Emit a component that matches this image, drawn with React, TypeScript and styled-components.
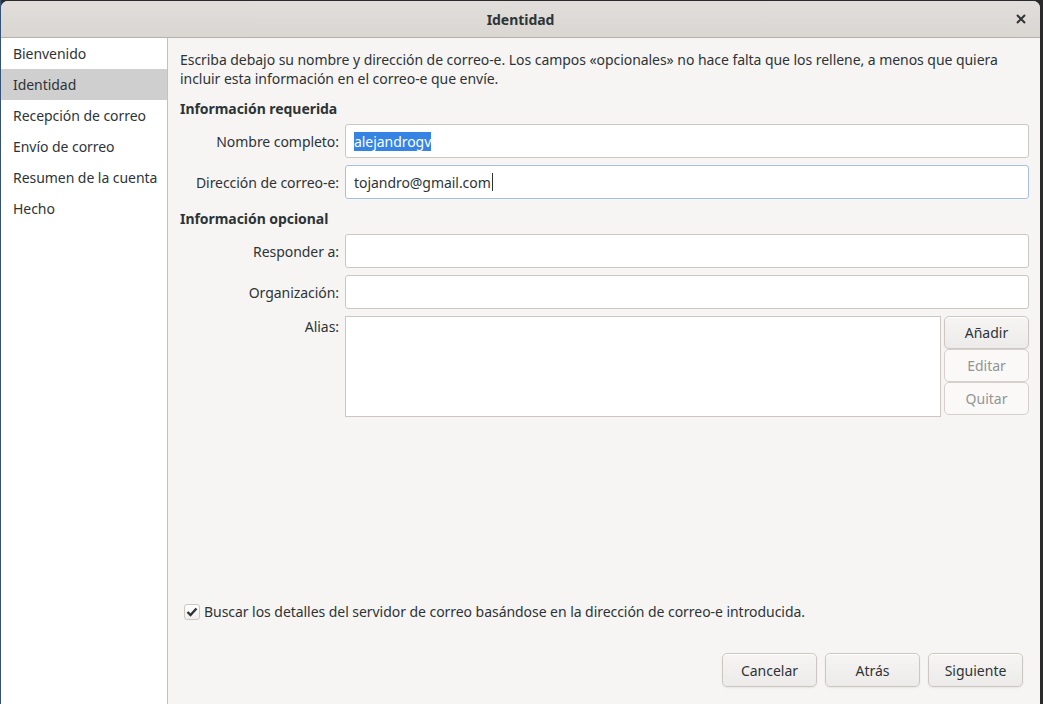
import React, {useState} from 'react';
import styled, {createGlobalStyle} from 'styled-components';

const GlobalStyle = createGlobalStyle`
  html, body {
    margin: 0;
    padding: 0;
    height: 100%;
    background: #2e3436;
  }
  body {
    font-family: "Noto Sans", "DejaVu Sans", sans-serif;
    font-size: 14px;
    letter-spacing: -0.05px;
    color: #2e3436;
  }
  #root {
    height: 100%;
  }
`

const Desktop = styled.div`
  height: 704px;
  padding: 1px 3px 0 1px;
  box-sizing: border-box;
  background: linear-gradient(90deg, #3a5f8f 0, #2a2a2a 2px, #2a2a2a 100%);
`

const Window = styled.div`
  height: 703px;
  display: flex;
  flex-direction: column;
  background: #f6f5f4;
  border-radius: 7px 7px 0 0;
  overflow: hidden;
`

const TitleBar = styled.div`
  height: 36px;
  flex-shrink: 0;
  display: flex;
  align-items: center;
  justify-content: center;
  position: relative;
  background: linear-gradient(#e1dedb, #dad6d2);
  border-bottom: 1px solid #b6b1ab;
  font-weight: bold;
  font-size: 14px;
  color: #2e3436;
`

const CloseButton = styled.button`
  position: absolute;
  right: 10px;
  top: 9px;
  width: 18px;
  height: 18px;
  border: none;
  background: none;
  padding: 0;
  display: flex;
  align-items: center;
  justify-content: center;
`

const Body = styled.div`
  flex: 1;
  display: flex;
  min-height: 0;
`

const Sidebar = styled.ul`
  width: 166px;
  margin: 0;
  padding: 0;
  list-style: none;
  background: #ffffff;
  border-right: 1px solid #c4c0bb;
`

const SideItem = styled.li<{ $active?: boolean }>`
  height: 31px;
  line-height: 31px;
  padding-left: 12px;
  background: ${p => p.$active ? '#cfcfcf' : 'transparent'};
  color: #2e3436;
  white-space: nowrap;
`

const Content = styled.div`
  flex: 1;
  display: flex;
  flex-direction: column;
  padding: 12px 11px 17px 12px;
  min-width: 0;
`

const Intro = styled.p`
  margin: 0;
  line-height: 19px;
`

const SectionTitle = styled.h3<{ $top: number }>`
  margin: ${p => p.$top}px 0 6px;
  font-size: 14px;
  font-weight: bold;
  line-height: 19px;
`

const Grid = styled.div`
  display: grid;
  grid-template-columns: 159px 1fr;
  column-gap: 6px;
  row-gap: 7px;
`

const Label = styled.label<{ $top?: boolean }>`
  text-align: right;
  align-self: ${p => p.$top ? 'start' : 'center'};
  padding-top: ${p => p.$top ? '1px' : '0'};
  white-space: nowrap;
`

const TextField = styled.div<{ $focused?: boolean }>`
  height: 34px;
  box-sizing: border-box;
  display: flex;
  align-items: center;
  padding: 0 8px;
  background: #ffffff;
  border: 1px solid ${p => p.$focused ? '#a9bfde' : '#cdc7c2'};
  border-radius: 3px;
  white-space: nowrap;
`

const Selected = styled.span`
  background: #3584e4;
  color: #ffffff;
`

const Caret = styled.span`
  display: inline-block;
  width: 1px;
  height: 18px;
  background: #2e3436;
  margin-left: 1px;
`

const AliasRow = styled.div`
  display: flex;
  gap: 3px;
  height: 101px;
`

const AliasList = styled.div`
  flex: 1;
  background: #ffffff;
  border: 1px solid #cdc7c2;
`

const SideButtons = styled.div`
  width: 85px;
  display: flex;
  flex-direction: column;
`

const Button = styled.button<{ $disabled?: boolean; $w?: number }>`
  height: 34px;
  width: ${p => p.$w ? `${p.$w}px` : 'auto'};
  box-sizing: border-box;
  font-family: inherit;
  font-size: 14px;
  color: ${p => p.$disabled ? '#929595' : '#2e3436'};
  background: ${p => p.$disabled ? '#faf9f8' : 'linear-gradient(#f6f5f4, #edebe9)'};
  border: 1px solid ${p => p.$disabled ? '#d5d0cc' : '#cdc7c2'};
  border-radius: 5px;
  box-shadow: ${p => p.$disabled ? 'none' : 'inset 0 1px #ffffff, 0 1px 2px rgba(0,0,0,0.07)'};
  padding: 0;
`

const StackButton = styled(Button)`
  height: 33px;
  flex-shrink: 0;
`

const Spacer = styled.div`
  flex: 1;
`

const CheckRow = styled.label`
  display: flex;
  align-items: center;
  gap: 4px;
  padding-left: 4px;
`

const CheckBox = styled.span`
  width: 16px;
  height: 16px;
  box-sizing: border-box;
  border: 1px solid #cdc7c2;
  border-radius: 3px;
  background: linear-gradient(#ffffff, #f1efed);
  display: flex;
  align-items: center;
  justify-content: center;
`

const Footer = styled.div`
  display: flex;
  justify-content: flex-end;
  gap: 8px;
  margin-top: 32px;
  padding-right: 6px;
`

const sections = ['Bienvenido', 'Identidad', 'Recepción de correo', 'Envío de correo', 'Resumen de la cuenta', 'Hecho'];

const App = () => {
    const [active] = useState(1);

    return (<>
        <GlobalStyle/>
        <Desktop>
            <Window>
                <TitleBar>
                    Identidad
                    <CloseButton aria-label="Cerrar">
                        <svg width="10" height="10" viewBox="0 0 10 10">
                            <path d="M1 1 L9 9 M9 1 L1 9" stroke="#2e3436" strokeWidth="2"/>
                        </svg>
                    </CloseButton>
                </TitleBar>
                <Body>
                    <Sidebar>
                        {sections.map((s, i) => <SideItem key={s} $active={i === active}>{s}</SideItem>)}
                    </Sidebar>
                    <Content>
                        <Intro>
                            Escriba debajo su nombre y dirección de correo-e. Los campos «opcionales» no hace falta que los rellene, a menos que quiera incluir esta información en el correo-e que envíe.
                        </Intro>
                        <SectionTitle $top={11}>Información requerida</SectionTitle>
                        <Grid>
                            <Label>Nombre completo:</Label>
                            <TextField><Selected>alejandrogv</Selected></TextField>
                            <Label>Dirección de correo-e:</Label>
                            <TextField $focused>tojandro@gmail.com<Caret/></TextField>
                        </Grid>
                        <SectionTitle $top={10}>Información opcional</SectionTitle>
                        <Grid>
                            <Label>Responder a:</Label>
                            <TextField/>
                            <Label>Organización:</Label>
                            <TextField/>
                            <Label $top>Alias:</Label>
                            <AliasRow>
                                <AliasList/>
                                <SideButtons>
                                    <StackButton>Añadir</StackButton>
                                    <StackButton $disabled>Editar</StackButton>
                                    <StackButton $disabled>Quitar</StackButton>
                                </SideButtons>
                            </AliasRow>
                        </Grid>
                        <Spacer/>
                        <CheckRow>
                            <CheckBox>
                                <svg width="12" height="10" viewBox="0 0 12 10">
                                    <path d="M1.5 5 L4.5 8 L10.5 1.5" stroke="#2e3436" strokeWidth="2.4" fill="none"/>
                                </svg>
                            </CheckBox>
                            Buscar los detalles del servidor de correo basándose en la dirección de correo-e introducida.
                        </CheckRow>
                        <Footer>
                            <Button $w={95}>Cancelar</Button>
                            <Button $w={95}>Atrás</Button>
                            <Button $w={95}>Siguiente</Button>
                        </Footer>
                    </Content>
                </Body>
            </Window>
        </Desktop>
    </>);
};

export default App;
